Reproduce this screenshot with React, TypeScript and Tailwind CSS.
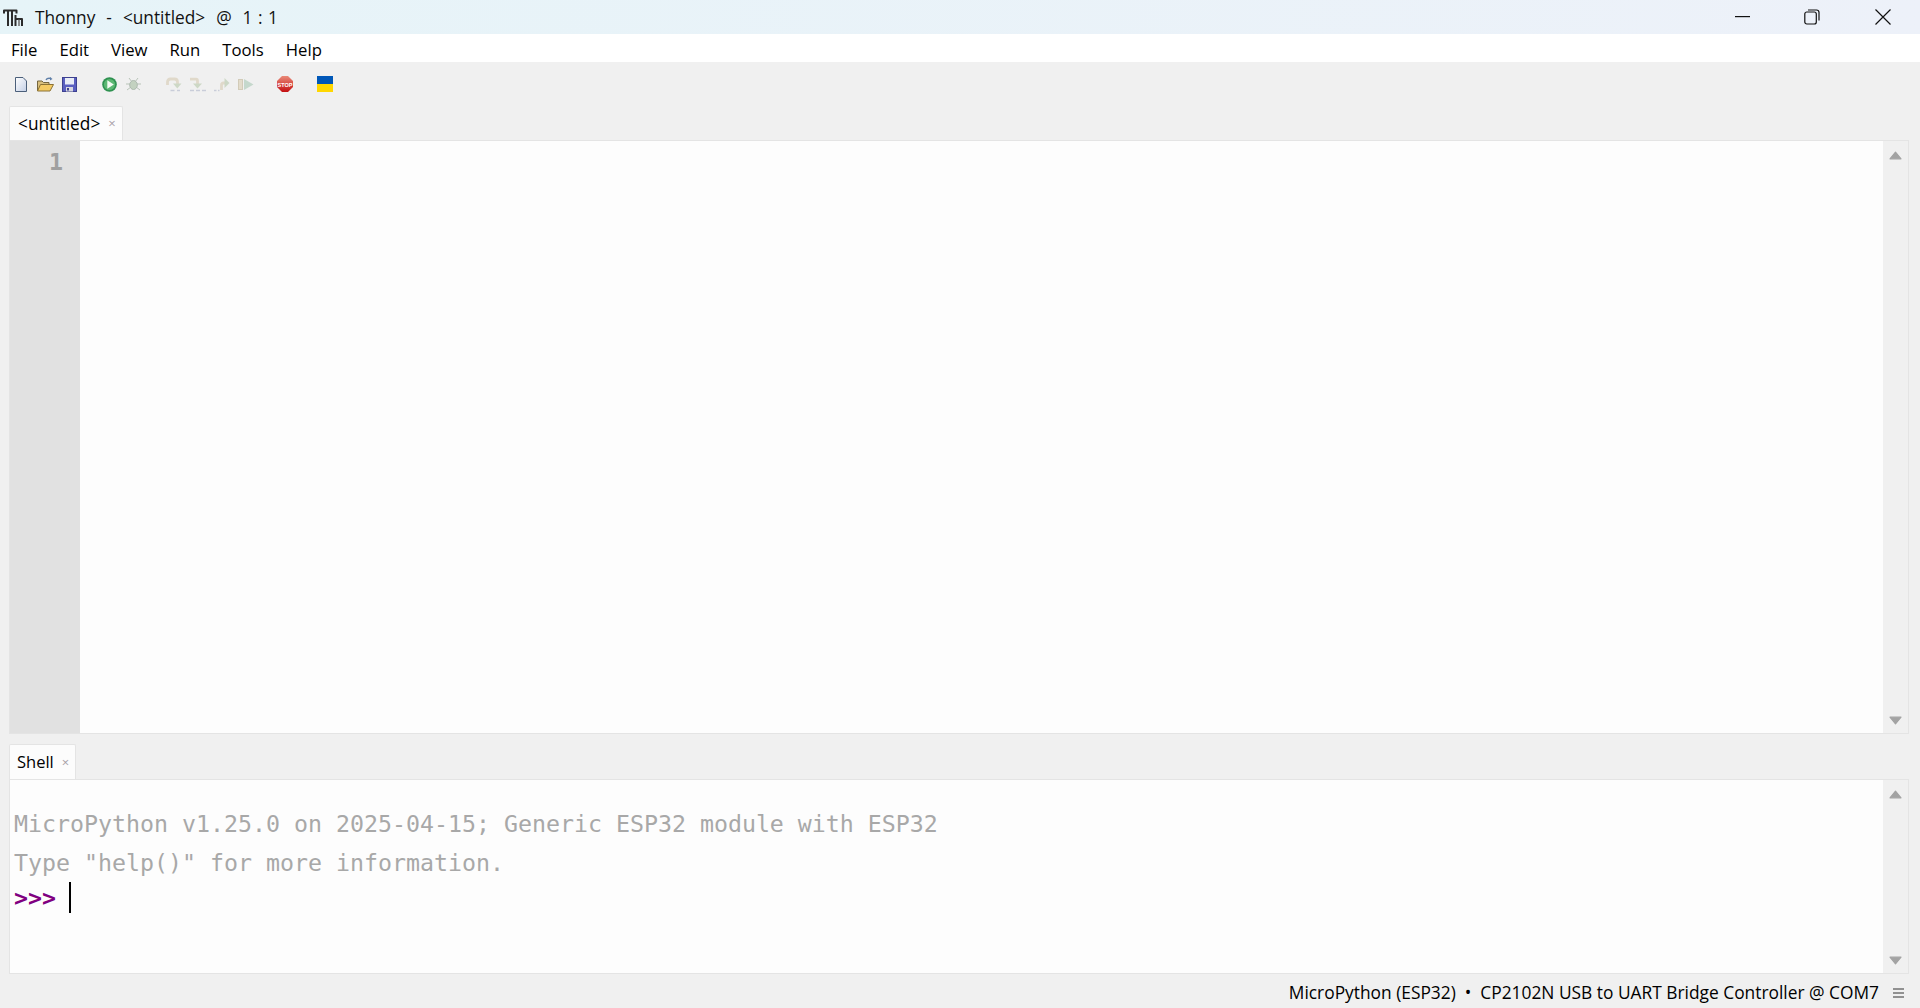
import React from "react";

const ui = "font-['Open_Sans','Liberation_Sans',sans-serif]";
const mono = "font-['DejaVu_Sans_Mono',monospace]";

function ThonnyLogo() {
  return (
    <svg width="20" height="18" viewBox="0 0 20 18" fill="none" stroke="#2b2b2b" strokeWidth="2" strokeLinejoin="round">
      <path d="M1 4.500 V1.500 H13.500 V4.500" />
      <path d="M5 1.500 V17 M9 1.500 V17" />
      <path d="M12.500 17 V6 M12.500 10 H19 V17" />
      <path d="M16 10.500 V17" stroke="#6b6b6b" strokeWidth="1.500" />
    </svg>
  );
}

function NewFile() {
  return (
    <svg width="12" height="15" viewBox="0 0 12 15">
      <defs>
        <linearGradient id="nf" x1="0" y1="0" x2="1" y2="1">
          <stop offset="0" stopColor="#ffffff" />
          <stop offset="1" stopColor="#c3cfe6" />
        </linearGradient>
      </defs>
      <path d="M.5.5H8L11.5 4V14.5H.5Z" fill="url(#nf)" stroke="#4b5f7a" />
    </svg>
  );
}

function OpenFile() {
  return (
    <svg width="17" height="15" viewBox="0 0 17 15">
      <path d="M9 3 C10 1 12 1 14 1.500" fill="none" stroke="#5f7fa8" strokeWidth="1.400" />
      <path d="M13 0 L15.500 2 L13 3.500Z" fill="#5f7fa8" />
      <path d="M.5 14 V4 H5 L6.500 5.500 H12 V8" fill="#d9bf7c" stroke="#75663f" />
      <path d="M.5 14 L3.500 7.500 H16.500 L13 14Z" fill="#f5cb63" stroke="#8a7236" />
    </svg>
  );
}

function SaveFile() {
  return (
    <svg width="15" height="15" viewBox="0 0 15 15">
      <rect x=".5" y=".5" width="14" height="14" fill="#5a5fc0" stroke="#3d418f" />
      <rect x="3" y="1" width="9" height="6.500" fill="#e8ecf6" />
      <rect x="4" y="10" width="7" height="4.500" fill="#d8d8e0" />
      <rect x="5" y="11" width="2" height="2.500" fill="#3d418f" />
    </svg>
  );
}

function RunIcon() {
  return (
    <svg width="15" height="15" viewBox="0 0 15 15">
      <circle cx="7.500" cy="7.500" r="7.300" fill="#2e9150" />
      <circle cx="7.500" cy="7.500" r="5.600" fill="#5cb873" />
      <path d="M5.300 3.300 L11.800 7.500 L5.300 11.700Z" fill="#f3fbf3" />
    </svg>
  );
}

function DebugIcon() {
  return (
    <svg width="15" height="15" viewBox="0 0 15 15" stroke="#b9c4b8" fill="none" strokeWidth="1">
      <path d="M3 1 L6 5 M12 1 L9 5 M0 7 H4 M11 7 H15 M1 13 L5 10 M14 13 L10 10" />
      <ellipse cx="7.500" cy="8" rx="3.800" ry="4.500" fill="#c3d2c0" stroke="#aebbb0" />
    </svg>
  );
}

function StepOver() {
  return (
    <svg width="16" height="15" viewBox="0 0 16 15" fill="none">
      <path d="M1.500 8 V5 Q1.500 2 4.500 2 H8.500 Q11.500 2 11.500 5 V7" stroke="#e0d9ca" strokeWidth="2.800" />
      <path d="M7 6.500 H15.500 L11.300 11.500Z" fill="#cdd8c6" />
      <path d="M4.500 13.500 H8.500 M11 13.500 H14" stroke="#c9cdd9" strokeWidth="1.500" />
    </svg>
  );
}

function StepInto() {
  return (
    <svg width="16" height="15" viewBox="0 0 16 15" fill="none">
      <path d="M0 2.200 H6 Q7.500 2.200 7.500 4 V7" stroke="#e0d9ca" strokeWidth="2.800" />
      <path d="M3 6.500 H12 L7.500 11.500Z" fill="#cdd8c6" />
      <path d="M0 13.500 H4 M6 13.500 H10 M12 13.500 H16" stroke="#c9cdd9" strokeWidth="1.500" />
    </svg>
  );
}

function StepOut() {
  return (
    <svg width="16" height="15" viewBox="0 0 16 15" fill="none">
      <path d="M7.500 13 V8 Q7.500 6 9.500 6 H11" stroke="#e0d9ca" strokeWidth="2.800" />
      <path d="M10.500 1 L15.500 6 L10.500 11Z" fill="#cdd8c6" />
      <path d="M0 13.500 H2.500 M4 13.500 H5.500" stroke="#c9cdd9" strokeWidth="1.500" />
    </svg>
  );
}

function Resume() {
  return (
    <svg width="16" height="15" viewBox="0 0 16 15">
      <rect x=".5" y="2.500" width="4" height="10" fill="#e3dccb" stroke="#d2cbb8" />
      <path d="M6 2 L15.500 7.500 L6 13Z" fill="#c5d8cc" />
    </svg>
  );
}

function StopIcon() {
  return (
    <svg width="16" height="16" viewBox="0 0 16 16">
      <defs>
        <linearGradient id="st" x1="0" y1="0" x2="0" y2="1">
          <stop offset="0" stopColor="#e98a78" />
          <stop offset="1" stopColor="#c40f12" />
        </linearGradient>
      </defs>
      <path d="M5 0 H11 L16 5 V11 L11 16 H5 L0 11 V5Z" fill="url(#st)" />
      <text x="8" y="10.500" textAnchor="middle" fontSize="5.500" fontWeight="700" fill="#fff" fontFamily="'Liberation Sans',sans-serif">STOP</text>
    </svg>
  );
}

function Flag() {
  return (
    <div className="flex h-4 w-4 flex-col">
      <div className="h-2 bg-[#0057b8]" />
      <div className="h-2 bg-[#ffd700]" />
    </div>
  );
}

function Arrow({ down }: { down?: boolean }) {
  return (
    <svg width="13" height="9" viewBox="0 0 13 9" className={down ? "rotate-180" : ""}>
      <path d="M6.500 1.200 L12 7.800 H1Z" fill="#a3a3a3" stroke="#a3a3a3" strokeWidth="1.200" strokeLinejoin="round" />
    </svg>
  );
}

function Scrollbar({ pad }: { pad: string }) {
  return (
    <div className={`flex w-[25px] shrink-0 flex-col items-center justify-between bg-[#f0f0f0] ${pad}`}>
      <Arrow />
      <Arrow down />
    </div>
  );
}

function Tab({ label, cls, text }: { label: string; cls: string; text: string }) {
  return (
    <div className={`flex h-full items-center rounded-t-[2px] border border-b-0 border-[#e4e4e4] bg-[#fcfcfc] ${cls}`}>
      <span className={`leading-none text-black ${text}`}>{label}</span>
      <span className="text-[13px] leading-none text-[#a8a0a8]">×</span>
    </div>
  );
}

export default function App() {
  return (
    <div className={`flex h-screen w-full flex-col overflow-hidden bg-[#f0f0f0] ${ui}`}>
      <div className="flex h-[34px] shrink-0 items-center bg-gradient-to-r from-[#e6f4f8] to-[#edf1f9]">
        <div className="ml-[3px] mr-[12px] mt-[2px] flex w-[20px] justify-center"><ThonnyLogo /></div>
        <span className="mt-[1px] whitespace-pre text-[17.300px] leading-none text-[#111] [word-spacing:1px]">Thonny  -  &lt;untitled&gt;  @  1 : 1</span>
        <div className="ml-auto flex items-center">
          <svg width="15" height="2" className="mr-[54px]"><rect width="15" height="1.200" fill="#111" /></svg>
          <svg width="16" height="16" viewBox="0 0 16 16" fill="none" stroke="#111" strokeWidth="1.200" className="mr-[55px]">
            <rect x=".8" y="3" width="11.500" height="12" rx="2" />
            <path d="M4 1 H12.500 Q15 1 15 3.500 V11.500" />
          </svg>
          <svg width="16" height="16" viewBox="0 0 16 16" stroke="#111" strokeWidth="1.200" className="mr-[29px]">
            <path d="M.5.5 L15.500 15.500 M15.500.5 L.5 15.500" />
          </svg>
        </div>
      </div>

      <div className="flex h-[28px] shrink-0 items-center gap-[22px] bg-white pl-[11px] pt-[4px] text-[16.700px] leading-none text-black">
        <span>File</span>
        <span>Edit</span>
        <span>View</span>
        <span>Run</span>
        <span>Tools</span>
        <span>Help</span>
      </div>

      <div className="flex h-[44px] shrink-0 items-center pl-[15px]">
        <NewFile />
        <div className="ml-[10px]"><OpenFile /></div>
        <div className="ml-[8px]"><SaveFile /></div>
        <div className="ml-[25px]"><RunIcon /></div>
        <div className="ml-[9px]"><DebugIcon /></div>
        <div className="ml-[25px]"><StepOver /></div>
        <div className="ml-[8px]"><StepInto /></div>
        <div className="ml-[8px]"><StepOut /></div>
        <div className="ml-[8px]"><Resume /></div>
        <div className="ml-[23px]"><StopIcon /></div>
        <div className="ml-[24px]"><Flag /></div>
      </div>

      <div className="h-[34px] shrink-0 pl-[9px]">
        <Tab label="<untitled>" cls="w-[114px] gap-[8px] pl-[8px]" text="text-[17.300px]" />
      </div>

      <div className="ml-[9px] mr-[11px] flex h-[594px] shrink-0 border border-[#e4e4e4] bg-[#fdfdfd]">
        <div className={`flex w-[70px] shrink-0 justify-end bg-[#e1e1e1] pr-[17px] pt-[5px] text-[23.250px] font-bold leading-[31px] text-[#a0a0a0] ${mono}`}>1</div>
        <div className="flex-1" />
        <Scrollbar pad="pt-[10px] pb-[8px]" />
      </div>

      <div className="h-[45px] shrink-0 pl-[9px] pt-[10px]">
        <Tab label="Shell" cls="w-[67px] gap-[8px] pl-[7px]" text="text-[16.500px]" />
      </div>

      <div className="ml-[9px] mr-[11px] flex h-[195px] shrink-0 border border-[#e4e4e4] bg-[#fdfdfd]">
        <div className={`flex-1 pl-[4px] pt-[24px] text-[23.250px] ${mono}`}>
          <div className="h-[39px] leading-[39px] text-[#a8a8a8]">MicroPython v1.25.0 on 2025-04-15; Generic ESP32 module with ESP32</div>
          <div className="h-[39px] leading-[39px] text-[#a8a8a8]">Type "help()" for more information.</div>
          <div className="flex h-[31px] items-center font-bold leading-[31px] text-[#800080]">
            <span>&gt;&gt;&gt;</span>
            <span className="ml-[13px] h-[31px] w-[2px] bg-black" />
          </div>
        </div>
        <Scrollbar pad="pt-[10px] pb-[8px]" />
      </div>

      <div className="flex flex-1 items-center justify-end pt-[3px] text-[17.350px] leading-none text-black">
        <span className="whitespace-pre">MicroPython (ESP32)  •  CP2102N USB to UART Bridge Controller @ COM7</span>
        <svg width="14" height="10" viewBox="0 0 14 10" stroke="#333" strokeWidth="1.100" className="ml-[13px] mr-[14px]">
          <path d="M1 1 H12 M1 5 H12 M1 9 H12" />
        </svg>
      </div>
    </div>
  );
}
